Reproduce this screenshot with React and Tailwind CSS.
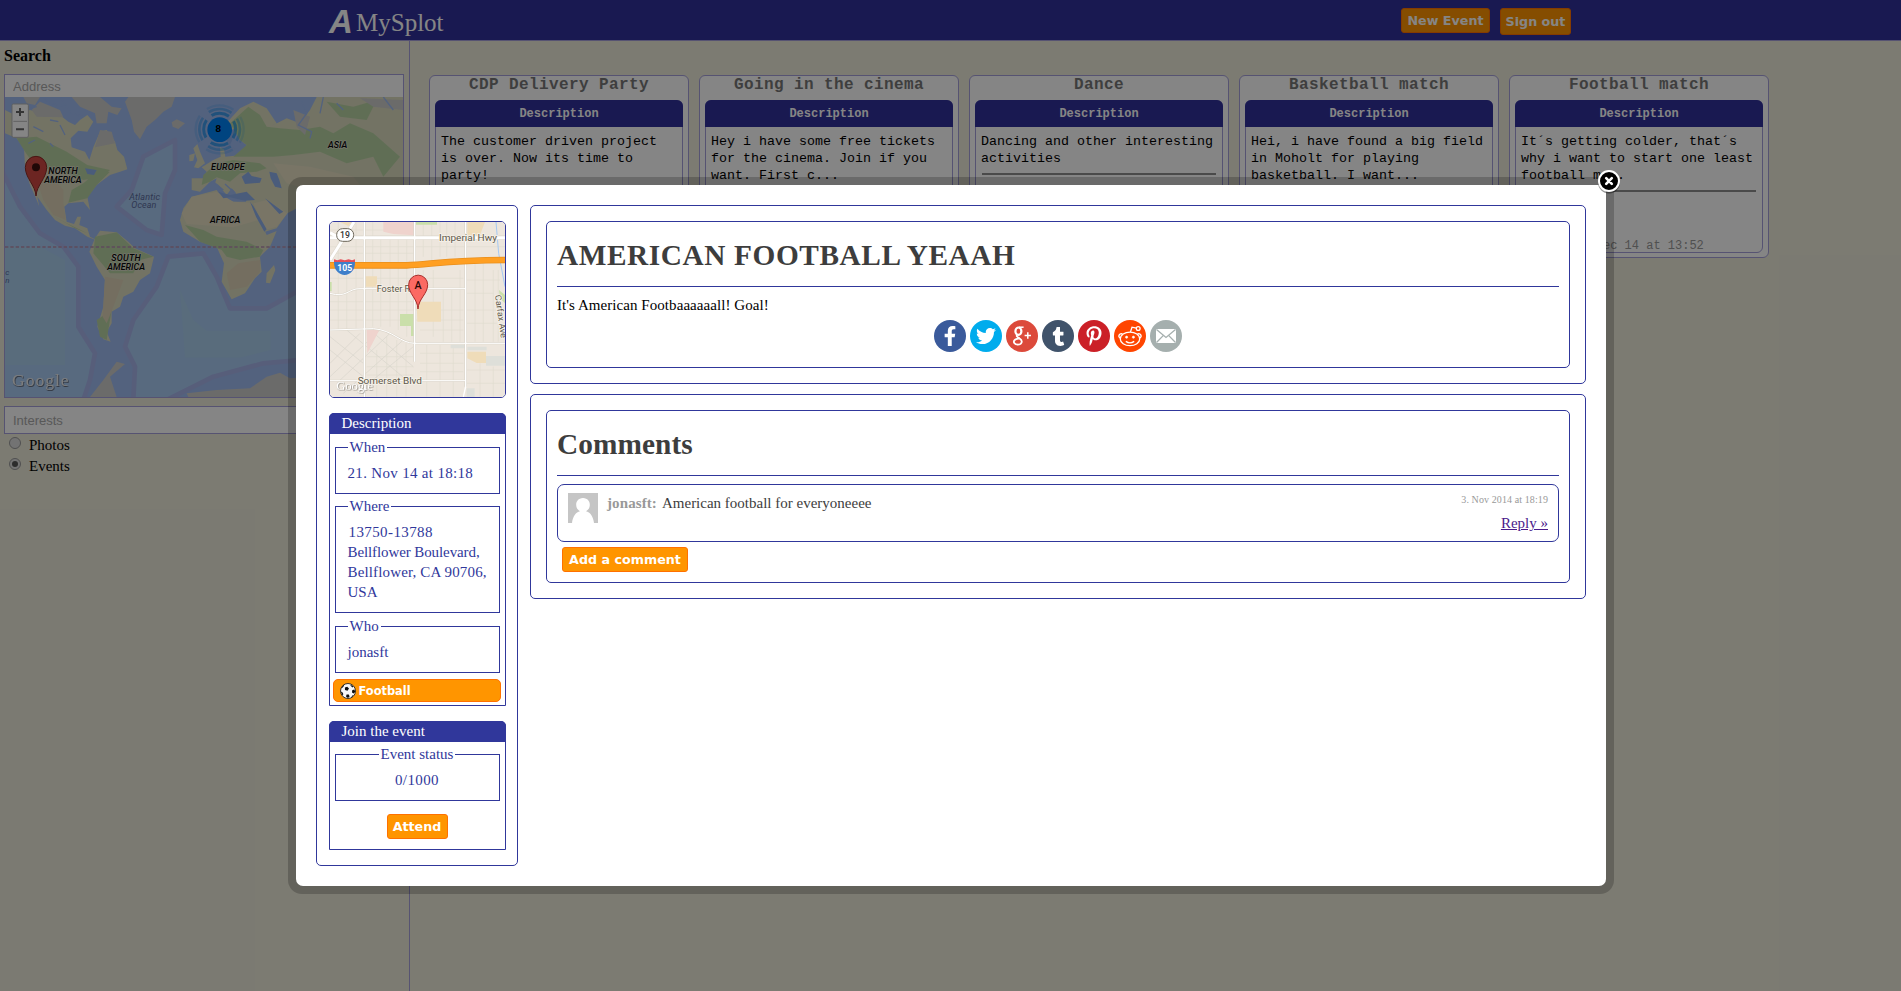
import React from "react";
import { FaFacebookF, FaTwitter, FaTumblr, FaPinterestP } from "react-icons/fa";

const serif = "font-['Liberation_Serif',serif]";

const events = [
  { title: "CDP Delivery Party", text: ["The customer driven project", "is over. Now its time to", "party!"] },
  { title: "Going in the cinema", text: ["Hey i have some free tickets", "for the cinema. Join if you", "want. First c..."] },
  { title: "Dance", text: ["Dancing and other interesting", "activities"] },
  { title: "Basketball match", text: ["Hei, i have found a big field", "in Moholt for playing", "basketball. I want..."] },
  { title: "Football match", text: ["It´s getting colder, that´s", "why i want to start one least", "football m..."], date: "9. Dec 14 at 13:52" },
];

function OrangeButton({ children, className = "" }) {
  return (
    <button
      className={`flex items-center justify-center rounded-[3px] border border-[#ff7100] bg-[#ff9500] pt-px font-['DejaVu_Sans',sans-serif] text-[12.7px] font-bold whitespace-nowrap text-white ${className}`}
    >
      {children}
    </button>
  );
}

function WorldMap() {
  const label = { fontFamily: "Roboto, sans-serif", fontStyle: "italic", fontWeight: 500, fontSize: 27 };
  return (
    <svg viewBox="15 111 1194 900" className="block h-[300px] w-[398px]" preserveAspectRatio="none">
      <rect x="15" y="111" width="1194" height="900" fill="#9fbcf2" />
      <g fill="#9db6ec" stroke="#a8b4ea" strokeWidth="14" strokeLinejoin="round">
        <path d="M430 290L525 240L525 330L495 400L485 525L440 510L350 440L395 390Z" fill="#a9cbf3" />
        <path d="M5 330L60 440L120 520L190 560L235 620L235 800L285 880L270 960L250 1020H5Z" fill="#a9cbf3" />
        <path d="M505 590L610 580L650 650L690 745L800 745L900 690V900L790 910L640 950L500 1020H400L405 920L375 860L400 780L470 680Z" fill="#a9cbf3" />
      </g>
      <path d="M15 560L120 560L195 600V915H15Z M540 690L580 780L620 812H812V870L720 893H555Z" fill="#abd0ee" />
      <g fill="#dcdcc0">
        <path d="M15 150L45 165L90 150L130 160L180 165L205 185L225 195L240 180L262 165L280 185L262 215L235 212L212 235L215 262L255 275L268 300L280 262L300 215L320 210L345 245L352 270L372 290L382 328L360 335L330 345L290 375L262 410L270 450L250 425L205 430L193 440L200 485L222 492L232 470L243 470L238 495L262 505L270 530L300 545L262 530L225 505L195 497L165 480L140 450L112 410L118 440L106 410L88 370L75 320L72 265L50 235L15 220Z" />
        <path d="M285 535L300 512L350 517L385 545L405 565L462 590L450 640L420 660L400 695L370 710L360 740L335 755L335 790L320 815L332 845L310 838L292 800L310 740L315 660L290 620L268 575Z" />
        <path d="M575 355L610 355L620 335L605 322L640 300L662 290L660 262L672 268L676 290L725 285L740 255L720 240L735 215L715 205L690 240L665 235L665 205L720 145L760 125L800 145L830 190L810 200L860 175L900 190L930 150L950 111H1209V480L1000 480L900 440L862 460L830 505L795 515L770 460L735 435L740 418L715 415L705 395L695 385L680 405L655 375L645 370L650 355L630 365L600 395L575 390Z" />
        <path d="M575 410L650 390L665 410L700 425L755 425L780 480L800 525L830 513L810 560L780 590L785 635L765 655L735 700L695 718L665 665L672 610L650 560L600 545L550 515L540 480L550 445Z" />
        <path d="M580 265L592 252L600 275L615 310L595 325L582 322L592 300Z M568 285L585 280L580 302L568 304Z M800 640L822 615L826 630L810 670L798 668Z" />
      </g>
      <g fill="#b9d4a4">
        <path d="M50 235L110 230L200 275L262 315L330 330L310 350L250 360L180 330L110 325L75 275Z M280 345L330 335L290 375L262 415L205 428L215 390L250 370Z" />
        <path d="M285 530L350 517L400 565L460 590L420 600L400 640L330 640L280 580Z M290 780L335 750L320 840L300 830Z M165 470L200 490L262 520L225 505Z" />
        <path d="M690 190L745 140L780 165L800 200L840 205L900 210L960 200L1000 220L1050 190L1120 220L1200 290L1150 350L1120 290L1040 310L960 275L880 285L820 290L700 290L740 255L720 240Z M980 125L1060 140L1130 120L1100 180L1020 170Z" />
        <path d="M610 345L650 310L700 300L780 310L800 325L770 335L720 340L690 365L650 352L630 365L605 375Z M555 495L610 510L650 530L740 545L790 570L780 590L720 600L680 590L665 570L600 545Z" />
      </g>
      <path d="M575 410L650 395L700 425L755 428L775 480L700 502L560 492L545 460Z M760 430L800 420L862 460L830 500L795 510Z M820 310L930 320L1060 350L1100 400L960 400L860 370Z" fill="#e8e0c4" />
      <path d="M112 365L160 355L190 390L190 430L198 480L160 465L130 420Z M315 650L370 660L340 740L320 790L308 770Z M715 610L780 600L780 635L740 680L690 690L680 640Z" fill="#dfd3b8" />
      <g fill="#cdcdcb">
        <path d="M385 111H525L515 140L490 155L465 180L440 200L420 238L402 215L395 180L375 125Z" />
        <path d="M70 111H120L105 135L80 130Z M95 150L120 125L180 150L190 172L110 170Z M215 111H300L335 140L365 145L352 165L325 155L320 190L290 190L285 160L240 140Z M300 210L335 215L345 250L285 262Z M515 187L530 178L555 190L535 207L518 200Z M880 150L930 170L915 225L890 200Z M1080 115L1209 120V150L1120 140Z" />
        <path d="M270 1011L310 960L350 905L375 912L330 950L350 1011Z M560 1000L650 990L750 985L800 950L840 938L870 955L1209 930V1011H565Z" />
      </g>
      <g fill="#8fb0ec">
        <path d="M685 215L705 205L697 240L690 255L678 240Z M725 350L745 335L755 348L785 355L780 368L735 372Z M808 335L830 340L838 360L845 385L825 380L812 355Z M655 395L690 405L740 395L765 420L735 422L690 412L670 415Z M255 325L290 330L282 345L262 342Z" />
        <path d="M750 425L760 438L800 508L793 515L768 470Z M795 415L850 455L838 462Z" />
      </g>
      <g stroke="#9fbcf2" strokeWidth="4" fill="none">
        <path d="M70 150L110 140M130 111L150 130L200 140M180 111L215 160L250 170M195 225L180 195M100 200L130 215M150 180L175 185M905 125L920 160L895 195L935 215L930 235M970 111L960 160M1010 130L1030 150" />
        <path d="M715 270L690 262M640 365L670 390M675 372L705 400M1150 111L1180 150M150 250L160 260M85 250L105 240" />
      </g>
      <path d="M15 561H1209" stroke="#b58fae" strokeWidth="5" strokeDasharray="10 6" />
      <g style={label} fill="#0a0a0a" stroke="#dcdccb" strokeWidth="4" paintOrder="stroke">
        <text x="145" y="343" textLength="88">NORTH</text>
        <text x="133" y="369" textLength="112">AMERICA</text>
        <text x="633" y="330" textLength="101">EUROPE</text>
        <text x="984" y="265" textLength="58">ASIA</text>
        <text x="630" y="490" textLength="91">AFRICA</text>
        <text x="334" y="603" textLength="88">SOUTH</text>
        <text x="322" y="630" textLength="113">AMERICA</text>
      </g>
      <g fontFamily="Roboto, sans-serif" fontStyle="italic" fill="#5a6a9c">
        <text x="388" y="420" fontSize="27" textLength="92">Atlantic</text>
        <text x="394" y="444" fontSize="27" textLength="75">Ocean</text>
        <text x="16" y="645" fontSize="24">c</text>
        <text x="16" y="669" fontSize="24">n</text>
      </g>
      <g fill="none" stroke="#0087e8">
        <circle cx="659" cy="208" r="48" strokeWidth="9" opacity=".6" strokeDasharray="55 20.4" strokeDashoffset="27" />
        <circle cx="659" cy="208" r="61" strokeWidth="8" opacity=".35" strokeDasharray="72 23.8" strokeDashoffset="36" />
        <circle cx="659" cy="208" r="72" strokeWidth="7" opacity=".15" strokeDasharray="84 29" strokeDashoffset="42" />
      </g>
      <circle cx="659" cy="209" r="37" fill="#0083f5" />
      <text x="655" y="217" fontFamily="DejaVu Sans, sans-serif" fontWeight="700" fontSize="26" textAnchor="middle">8</text>
      <path d="M108 408C106 375 76 355 76 322A32 33 0 0 1 140 322C140 355 110 375 108 408Z" fill="#cf4841" stroke="#8b2a26" strokeWidth="3" />
      <circle cx="108" cy="322" r="12" fill="#3e100e" />
      <rect x="36" y="132" width="49" height="100" rx="4" fill="#fff" stroke="#b5b5b5" strokeWidth="3" />
      <path d="M40 184H81" stroke="#bbb" strokeWidth="3" />
      <path d="M48 156H72M60 144V168M48 208H72" stroke="#666" strokeWidth="6" />
      <g fontFamily="Liberation Serif, serif" fontSize="53">
        <text x="36" y="977" textLength="170" fill="#efefef" style={{ filter: "drop-shadow(2px 3px 1px #5a6070)" }}>Google</text>
      </g>
    </svg>
  );
}

function StreetMap() {
  return (
    <svg viewBox="150 156 525 525" className="block h-[175px] w-[175px] rounded-[4px]">
      <rect x="150" y="156" width="525" height="525" fill="#ede6dd" />
      <g fill="none" stroke="#e1dcd0" strokeWidth="2">
        <path d="M175 156V480M200 300V480M228 156V480M278 156V470M302 200V470M330 200V470M355 200V480M380 200V500M430 156V260M455 156V270M480 156V260M500 156V260M525 156V260M430 300V350M460 300V500M490 360V515M515 360V515M540 300V515M585 280V515M610 280V515M640 300V515M655 300V515" />
        <path d="M150 180H400M150 230H675M150 250H400M150 325H550M150 395H400M150 420H550M150 450H550M420 480H550M560 330H660M560 370H640M560 420H650M560 460H650M420 550H550M420 580H550M420 605H550M560 600H675M560 640H675M260 560H400M260 590H400M260 615H400M290 540V680M320 500V680M350 510V680M378 520V680M440 525V680M480 525V680M520 525V680M600 580V680M640 590V680" />
        <path d="M150 580L240 490M150 620L300 480M170 640L330 490M190 670L370 510M230 670L400 530M150 540L250 620M150 500L250 580M200 480L380 630M270 480L400 590" stroke="#d8d5cb" />
      </g>
      <g fill="#efdcb9">
        <path d="M410 395H483V455H412Z M257 319H291V350H257Z M562 156H615L600 195H562Z M562 545H618V579H590L562 565Z M180 156H215L205 168Z" />
      </g>
      <path d="M310 156H402V196L340 192L310 185Z M260 480H298L262 550Z" fill="#efd3cd" />
      <path d="M402 156H471V164H402Z M360 432H402V498H393V468H360Z M657 360L675 375V400L660 385Z M150 336H155V364H150Z" fill="#cadfaa" />
      <path d="M618 558H675V587H618Z M512 524H556V535H512Z M562 530H620V541H562Z M560 655H584V681H560Z" fill="#dedfd9" />
      <path d="M648 156L656 250L675 350" stroke="#a5c9f3" strokeWidth="3" fill="none" />
      <g fill="none" stroke="#dcd6cb">
        <path d="M150 203H675" strokeWidth="13" />
        <path d="M253 156V681M404 156V575M557 156V650" strokeWidth="8" />
        <path d="M150 188L175 202M150 270L222 156" strokeWidth="12" />
        <path d="M150 370C200 385 205 355 240 356H557M150 480L280 476C340 480 360 520 405 520H675M150 632H557" strokeWidth="6" />
      </g>
      <g fill="none" stroke="#fff" strokeWidth="4">
        <path d="M150 203H675" strokeWidth="9" />
        <path d="M253 156V681M404 156V575M557 156V650L550 681" />
        <path d="M150 188L175 202M150 270L222 156" strokeWidth="9" />
        <path d="M150 370C200 385 205 355 240 356H557M150 480L280 476C340 480 360 520 405 520H675M150 632H557" strokeWidth="3" />
      </g>
      <path d="M150 286H380C450 284 500 270 675 270" fill="none" stroke="#e98f1d" strokeWidth="20" />
      <path d="M150 286H380C450 284 500 270 675 270" fill="none" stroke="#ff9f22" strokeWidth="15" />
      <path d="M162 276H225C226 300 210 315 194 315S161 300 162 276Z" fill="#3f7fca" />
      <path d="M162 268L172 271L182 268L194 271L206 268L216 271L225 268V276H162Z" fill="#e5505a" />
      <text x="194" y="304" fontFamily="Roboto, sans-serif" fontWeight="700" fontSize="26" textAnchor="middle" fill="#fff">105</text>
      <rect x="170" y="176" width="51" height="38" rx="18" fill="#fff" stroke="#6b6558" strokeWidth="3" />
      <text x="195" y="204" fontFamily="Roboto, sans-serif" fontWeight="500" fontSize="26" textAnchor="middle" fill="#333">19</text>
      <g fontFamily="Liberation Serif, serif" fontSize="38">
        <text x="169" y="660" textLength="110" fill="#fff" style={{ filter: "drop-shadow(2px 2px 1px #8d887f)" }}>Google</text>
      </g>
      <g fontFamily="Roboto, sans-serif" fontSize="28" fill="#5d584b" stroke="#f6f1e8" strokeWidth="5" paintOrder="stroke">
        <text x="477" y="212" textLength="174" lengthAdjust="spacingAndGlyphs">Imperial Hwy</text>
        <text x="290" y="367" textLength="116" lengthAdjust="spacingAndGlyphs">Foster Rd</text>
        <text x="233" y="643" textLength="193" lengthAdjust="spacingAndGlyphs">Somerset Blvd</text>
        <text transform="translate(645 376) rotate(82)" fontSize="26" textLength="130" lengthAdjust="spacingAndGlyphs">Carfax Ave</text>
      </g>
      <path d="M414 417C412 385 386 372 386 344A28 28 0 0 1 443 344C443 372 416 385 414 417Z" fill="#fb6a63" stroke="#a82e2b" strokeWidth="3" />
      <text x="414" y="356" fontFamily="Roboto, sans-serif" fontWeight="500" fontSize="32" textAnchor="middle" fill="#2a0807">A</text>
    </svg>
  );
}

function SoccerBall() {
  return (
    <svg viewBox="0 0 16 16" className="h-4 w-4">
      <circle cx="8" cy="8" r="7.5" fill="#f7f7f7" stroke="#222" strokeWidth=".9" />
      <g fill="#0b0b0b">
        <path d="M4.9 4.6L7.2 3.8L9 5.6L7.5 7.8L5 7Z M10.2 1.4L13.4 3.4L12.6 4.6L10.8 3Z M12.2 7.2L14.2 6.6L15.4 8.8L13.6 10.4L12 9.4Z M6.6 11.4L8.8 11.4L9.6 13.4L8 15L6 13.6Z M.8 8.6L2.4 9.2L3.4 11.2L2.2 12.2Z M2.4 3L4.4 1.6L3.6 3.4L1.6 5.4Z M12.6 12.2L13.6 12.2L12 14.2L11.2 14.2Z" />
      </g>
    </svg>
  );
}

function GooglePlus() {
  return (
    <svg viewBox="0 0 32 32" className="h-8 w-8" fill="none" stroke="#fff">
      <ellipse cx="12.4" cy="11.2" rx="3" ry="3.7" strokeWidth="2.2" />
      <path d="M13 7.2H17.6" strokeWidth="1.5" />
      <path d="M11 15C9.900 16.500 12 17.300 13.600 18.400C17.600 21 15.400 24.600 12 24.600C8.400 24.600 6.600 21.800 9 19.800C10.200 18.800 12 18.600 13.400 18.400" strokeWidth="1.8" />
      <path d="M18.600 15.500H25M21.800 12.300V18.700" strokeWidth="1.500" />
    </svg>
  );
}

function Reddit() {
  return (
    <svg viewBox="0 0 32 32" className="h-8 w-8" fill="none" stroke="#fff" strokeWidth="1.3">
      <ellipse cx="16" cy="18.9" rx="9.7" ry="6.8" />
      <path d="M8.6 14.2C5.6 12.4 3.4 16.6 6.3 18.2M23.4 14.2C26.4 12.4 28.6 16.6 25.7 18.2" />
      <path d="M16.4 12.1L18 7.2L22.4 8.2" />
      <circle cx="24.2" cy="8.5" r="1.9" />
      <circle cx="12.6" cy="17.2" r="1.1" fill="#fff" strokeWidth=".6" />
      <circle cx="19.4" cy="17.2" r="1.1" fill="#fff" strokeWidth=".6" />
      <path d="M11.8 21.4Q16 24.4 20.2 21.4" />
    </svg>
  );
}

function Mail() {
  return (
    <svg viewBox="0 0 32 32" className="h-8 w-8">
      <rect x="6" y="9" width="20" height="14" rx="1" fill="#fff" />
      <path d="M6.5 9.5L16 17.5L25.5 9.5M6.5 22.5L13.2 15.6M25.5 22.5L18.8 15.6" fill="none" stroke="#a5afae" strokeWidth="1.3" />
    </svg>
  );
}

function Share({ bg, children }) {
  return <a className={`flex h-8 w-8 items-center justify-center rounded-full text-white ${bg}`}>{children}</a>;
}

function Field({ legend, className = "", center = false, children }) {
  return (
    <fieldset className={`mx-[5px] border border-[#30379b] px-3 pt-[7px] pb-[10px] ${center ? "text-center" : ""} ${className}`}>
      <legend className={`px-[2px] leading-[17px] ${center ? "mx-auto" : ""}`}>{legend}</legend>
      <div className="leading-5">{children}</div>
    </fieldset>
  );
}

function PanelTitle({ children }) {
  return <h3 className="-mx-px -mt-px h-[21px] rounded-t-[5px] bg-[#30379b] pl-[13px] leading-[21px] text-white">{children}</h3>;
}

function EventCard({ event }) {
  return (
    <article className="h-[183px] w-[260px] shrink-0 rounded-[6px] border border-[#a5a0da] bg-white px-[5px] font-['Liberation_Mono',monospace]">
      <h2 className="h-6 text-center text-[16px] leading-[18px] font-bold tracking-[0.4px] whitespace-nowrap text-[#777]">{event.title}</h2>
      <div className="flex h-[153px] flex-col rounded-[6px] border border-[#a5a0da]">
        <h3 className="-mx-px -mt-px h-[27px] rounded-t-[6px] bg-[#30309b] pt-px text-center text-[12px] leading-[27px] font-bold text-white">Description</h3>
        <div className="px-[5px] pt-[6px] text-[13.33px] leading-[17px]">
          {event.text.map((line) => (
            <p key={line} className="whitespace-nowrap">{line}</p>
          ))}
        </div>
        <hr className="mx-[6px] mt-[6px] border-t-2 border-[#8f8f8f]" />
        {event.date && <p className="mt-auto text-center text-[12px] leading-[11px] text-[#999]">{event.date}</p>}
      </div>
    </article>
  );
}

function Modal() {
  return (
    <div className="relative h-[717px] w-[1326px] rounded-[14px] bg-black/20 p-2">
      <div className="flex h-[701px] items-start gap-3 rounded-[7px] bg-white p-5">
        <aside className="flex h-[661px] w-[202px] shrink-0 flex-col items-center rounded-[5px] border border-[#30379b] pt-[15px] text-[15px] text-[#30379b]">
          <div className="w-[177px] rounded-[5px] border border-[#30379b]">
            <StreetMap />
          </div>
          <section className="mt-[15px] h-[293px] w-[177px] rounded-t-[5px] border border-[#30379b]">
            <PanelTitle>Description</PanelTitle>
            <Field legend="When" className="mt-[5px]"><span className="tracking-[0.32px]">21. Nov 14 at 18:18</span></Field>
            <Field legend="Where" className="mt-1">
              <span className="pl-px tracking-[0.4px]">13750-13788</span><br />
              <span className="tracking-[-0.1px]">Bellflower Boulevard,</span><br />
              <span className="tracking-[0.15px] whitespace-nowrap">Bellflower, CA 90706,</span><br />USA
            </Field>
            <Field legend="Who" className="mt-[5px]">jonasft</Field>
            <div className="mt-[6px] ml-[3px] flex h-[23px] w-[168px] items-center rounded-[5px] border border-[#ff7100] bg-[#ff9500] pl-[6px] font-['DejaVu_Sans',sans-serif] text-[11.4px] font-bold text-white">
              <SoccerBall />
              <span className="ml-[3px] pt-[2px] leading-none">Football</span>
            </div>
          </section>
          <section className="mt-[15px] h-[129px] w-[177px] rounded-t-[5px] border border-[#30379b]">
            <PanelTitle>Join the event</PanelTitle>
            <Field legend="Event status" className="mt-1" center><span className="tracking-[0.4px]">0/1000</span></Field>
            <OrangeButton className="mx-auto mt-[13px] h-[25px] w-[61px]">Attend</OrangeButton>
          </section>
        </aside>
        <div className="flex flex-1 flex-col gap-[10px]">
          <section className="rounded-[5px] border border-[#30379b] p-[15px]">
            <div className="h-[147px] rounded-[5px] border border-[#30379b] px-[10px] pt-[17px]">
              <h1 className="h-12 border-b border-[#30379b] text-[29.3px] leading-[33px] font-bold tracking-[0.59px] text-[#3d3d3d]">AMERICAN FOOTBALL YEAAH</h1>
              <p className="mt-2 text-[15px] leading-5 tracking-[0.06px] text-black">It's American Footbaaaaaall! Goal!</p>
              <div className="mt-[5px] flex justify-center gap-1">
                <Share bg="bg-[#3a5a9b]"><FaFacebookF size={20} /></Share>
                <Share bg="bg-[#00aced]"><FaTwitter size={20} /></Share>
                <Share bg="bg-[#dc4a3b]"><GooglePlus /></Share>
                <Share bg="bg-[#40536b]"><FaTumblr size={19} /></Share>
                <Share bg="bg-[#cb2027]"><FaPinterestP size={20} /></Share>
                <Share bg="bg-[#ff4500]"><Reddit /></Share>
                <Share bg="bg-[#a5afae]"><Mail /></Share>
              </div>
            </div>
          </section>
          <section className="rounded-[5px] border border-[#30379b] p-[15px]">
            <div className="h-[173px] rounded-[5px] border border-[#30379b] px-[10px] pt-[17px]">
              <h1 className="h-12 border-b border-[#30379b] text-[29.3px] leading-[33px] font-bold tracking-[0.1px] text-[#3d3d3d]">Comments</h1>
              <div className="mt-2 flex h-[58px] rounded-[7px] border border-[#30379b] px-[10px] pt-2">
                <svg viewBox="0 0 30 30" className="h-[30px] w-[30px]">
                  <rect width="30" height="30" fill="#c5c5c5" />
                  <path d="M4 30C4.6 24 8 18.6 12 18.2C6.6 15.6 6.4 5.4 15 5C23.6 5.4 23.4 15.6 18 18.2C22 18.6 25.4 24 26 30Z" fill="#fff" />
                </svg>
                <p className="ml-[9px] text-[15px] leading-5 text-[#3d3d3d]">
                  <b className="mr-[5px] tracking-[0.1px] text-[#999]">jonasft:</b>American football for everyoneeee
                </p>
                <div className="ml-auto flex flex-col items-end">
                  <span className="text-[10px] leading-[14px] tracking-[0.1px] text-[#999]">3. Nov 2014 at 18:19</span>
                  <a className="mt-[6px] text-[15px] leading-5 text-[#4b1a8b] underline">Reply »</a>
                </div>
              </div>
              <OrangeButton className="mt-[5px] ml-[5px] h-[25px] w-[126px]">Add a comment</OrangeButton>
            </div>
          </section>
        </div>
      </div>
      <svg viewBox="0 0 26 26" className="absolute top-[-9px] right-[-8px] h-[26px] w-[26px]">
        <circle cx="13" cy="14.5" r="11" fill="#000" opacity=".4" />
        <circle cx="13" cy="13" r="10" fill="#000" stroke="#fff" strokeWidth="2" />
        <path d="M10.2 10.2L15.800 15.800M15.800 10.2L10.2 15.800" stroke="#fff" strokeWidth="2.6" strokeLinecap="round" />
      </svg>
    </div>
  );
}

export default function App() {
  return (
    <div className={`relative h-[991px] overflow-hidden bg-[#edebdb] text-black ${serif}`}>
      <header className="flex h-[41px] items-start border-b border-[#a5a0da] bg-[#30309b] text-white">
        <div className="flex items-start pl-[329px]">
          <span className="w-[27px] font-['Liberation_Sans',sans-serif] text-[33px] leading-[43px] font-bold italic">A</span>
          <span className="text-[25px] leading-[46px]">MySplot</span>
        </div>
        <div className="mt-2 mr-[330px] ml-auto flex gap-[10px]">
          <OrangeButton className="h-[25px] w-[89px]">New Event</OrangeButton>
          <OrangeButton className="h-[27px] w-[71px] pb-px">Sign out</OrangeButton>
        </div>
      </header>
      <div className="flex h-[950px]">
        <aside className="w-[410px] shrink-0 border-r border-[#a5a0da] pl-1">
          <h2 className="pt-[5px] text-[16px] leading-5 font-bold">Search</h2>
          <div className="mt-2 w-[400px] border border-[#a5a0da] bg-white">
            <input placeholder="Address" className="block h-[22px] w-full bg-white pl-2 font-['Liberation_Sans',sans-serif] text-[13px] placeholder:text-[#a9a9a9]" />
            <WorldMap />
          </div>
          <input placeholder="Interests" className="mt-2 block h-7 w-[400px] border border-[#a5a0da] bg-white pl-2 font-['Liberation_Sans',sans-serif] text-[13px] placeholder:text-[#a9a9a9]" />
          <div className="pt-px pl-[5px] text-[15px]">
            <label className="flex h-[21px] items-center gap-2">
              <span className="-mt-[6px] h-3 w-3 rounded-full border border-[#999] bg-[#ddd]" />
              Photos
            </label>
            <label className="flex h-[21px] items-center gap-2">
              <span className="-mt-[6px] flex h-3 w-3 items-center justify-center rounded-full border border-[#999] bg-[#ddd]">
                <span className="h-[6px] w-[6px] rounded-full bg-[#555]" />
              </span>
              Events
            </label>
          </div>
        </aside>
        <main className="flex gap-[10px] pt-[34px] pl-[19px]">
          {events.map((event) => (
            <EventCard key={event.title} event={event} />
          ))}
        </main>
      </div>
      <div className="absolute inset-0 bg-black/48 pt-[177px] pl-[288px]">
        <Modal />
      </div>
    </div>
  );
}
